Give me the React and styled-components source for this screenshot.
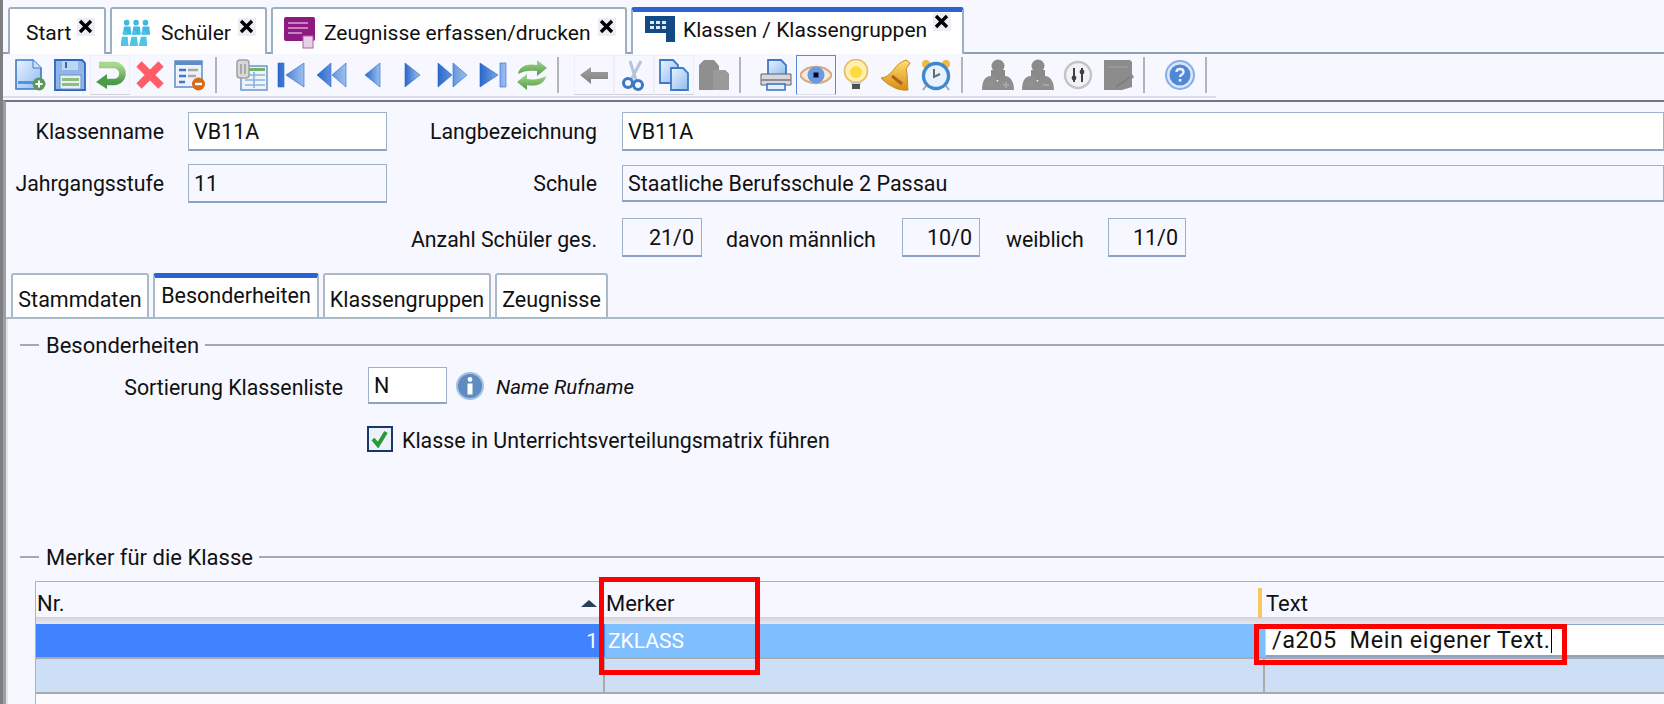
import React from "react";
import styled, { createGlobalStyle } from "styled-components";

const Global = createGlobalStyle`
  html, body { margin: 0; padding: 0; background: #f6f7ff; overflow: hidden; }
  body { font-family: Roboto, "Open Sans", sans-serif; color: #111; }
`;

const Page = styled.div`
  width: 1664px; height: 704px; overflow: hidden; box-sizing: border-box;
  border-left: 3px solid #7d7f82; background: #f6f7ff;
  display: flex; flex-direction: column; font-size: 21px;
`;
const TabBar = styled.div`
  height: 54px; box-sizing: border-box; flex: none; padding: 7px 0 0 5px;
  display: flex; gap: 4px; border-bottom: 2px solid #8ba3b5;
`;
const Tab = styled.div`
  width: ${p => p.$w}px; height: 47px; box-sizing: border-box; flex: none;
  background: #fff; border: 2px solid #9cb0c0; border-bottom: none;
  border-top: ${p => (p.$active ? "5px solid #2d62d2" : "2px solid #9cb0c0")};
  border-radius: 3px 3px 0 0; padding-left: ${p => p.$pad}px;
  display: flex; align-items: ${p => (p.$active ? "flex-start" : "center")};
  white-space: nowrap;
`;
const TabText = styled.span`
  margin-left: ${p => p.$ml || 0}px; line-height: 30px; padding-top: ${p => p.$pt ?? 2}px;
`;
const TabGlyph = styled.svg`
  width: ${p => p.$w || 32}px; height: ${p => p.$h || 32}px; flex: none; margin-top: ${p => p.$mt || 0}px;
`;
const CloseBox = styled.svg`
  width: 18px; height: 18px; flex: none; margin-left: ${p => p.$ml || 6}px; margin-top: ${p => p.$mt ?? -10}px;
`;
const Toolbar = styled.div`
  width: 1213px; height: 44px; box-sizing: border-box; flex: none; padding-left: 7px;
  display: flex; align-items: center; border-bottom: 2px solid #dcdcee;
`;
const Btn = styled.div`
  width: 40px; height: 40px; box-sizing: border-box; flex: none;
  display: flex; align-items: center; justify-content: center;
  border: 1px solid ${p => (p.$frame === "blue" ? "#5a8ae0" : p.$frame === "soft" ? "#eeeef6" : "transparent")};
  border-bottom-color: ${p => (p.$frame === "blue" ? "#dfe0ea" : p.$frame === "soft" ? "#d0d0d8" : "transparent")};
`;
const Sep = styled.div`
  width: 2px; height: 36px; background: #b4b4b8; flex: none; margin: 0 15px 0 5px;
`;
const Ico = styled.svg`
  width: 32px; height: 32px; display: block;
`;
const Defs = styled.svg`
  position: absolute; width: 0; height: 0;
`;
const Main = styled.div`
  margin-top: 2px; flex: 1; min-height: 0; display: flex; flex-direction: column;
  border-top: 2px solid #6f777c; border-left: 3px solid #9aa0a4; box-sizing: border-box;
`;
const Form = styled.div`
  display: flex; flex-direction: column; padding-top: 10px; height: 171px; box-sizing: border-box; flex: none;
`;
const Row = styled.div`
  display: flex; align-items: center; height: ${p => p.$h || 39}px; margin-top: ${p => p.$mt || 0}px; flex: none;
`;
const Label = styled.div`
  width: ${p => p.$w}px; flex: none; text-align: ${p => (p.$left ? "left" : "right")};
  margin-right: ${p => p.$mr ?? 24}px; margin-left: ${p => p.$ml || 0}px; white-space: nowrap; font-size: 21.3px;
  padding-top: ${p => p.$pt || 0}px;
`;
const Field = styled.div`
  box-sizing: border-box; height: ${p => p.$h || 39}px; width: ${p => (p.$w ? p.$w + "px" : "auto")};
  flex: ${p => (p.$w ? "none" : 1)}; background: ${p => (p.$edit ? "#fff" : "#f6f7ff")};
  border: 1px solid #9fb1c9; border-bottom: 2px solid #8ba3c5;
  display: flex; align-items: center; padding: 0 ${p => (p.$right ? 7 : 5)}px;
  justify-content: ${p => (p.$right ? "flex-end" : "flex-start")}; font-size: 21.5px; white-space: nowrap;
`;
const SubTabs = styled.div`
  height: 46px; flex: none; box-sizing: border-box; display: flex; gap: 4px; padding-left: 5px;
  border-bottom: 2px solid #a9bac6;
`;
const SubTab = styled.div`
  width: ${p => p.$w}px; height: 44px; box-sizing: border-box; flex: none; background: #fff;
  border: 2px solid #a9bac6; border-bottom: none;
  border-top: ${p => (p.$active ? "5px solid #2d62d2" : "2px solid #a9bac6")};
  border-radius: 3px 3px 0 0; text-align: center; font-size: 21.5px; white-space: nowrap;
  line-height: ${p => (p.$active ? 36 : 49)}px;
`;
const Panel = styled.div`
  flex: 1; min-height: 0; border-left: 2px solid #e1e3ee; display: flex; flex-direction: column; background: #f6f7ff;
`;
const Group = styled.div`
  display: flex; align-items: center; height: 28px; flex: none; margin-top: ${p => p.$mt}px; padding-left: 12px; font-size: 22px;
`;
const Dash = styled.div`
  width: 19px; height: 2px; background: #a8a8ac; flex: none; margin-right: 7px;
`;
const Rule = styled.div`
  flex: 1; height: 2px; background: #a8a8ac; margin-left: 6px;
`;
const InfoIcon = styled.svg`
  width: 28px; height: 28px; flex: none; margin-left: 9px;
`;
const Hint = styled.div`
  font-style: italic; font-size: 20.5px; margin-left: 12px; white-space: nowrap; padding-top: 2px;
`;
const CheckBox = styled.div`
  width: 26px; height: 26px; box-sizing: border-box; flex: none; margin-left: 359px;
  border: 2px solid #17386b; background: #eef1fa; display: flex; align-items: center; justify-content: center;
`;
const CheckText = styled.div`
  margin-left: 9px; white-space: nowrap; font-size: 21.4px; padding-top: 2px;
`;
const Table = styled.div`
  position: relative; margin: 10px 0 0 27px; flex: 1; min-height: 0;
  border-left: 1px solid #b0b0b0; border-top: 1px solid #b0b0b0; background: #fbfbff;
`;
const Columns = styled.div`
  display: grid; grid-template-columns: 569px 660px 1fr;
`;
const Head = styled.div`
  position: relative; height: 35px; background: #f6f7ff; display: flex; align-items: flex-end;
  padding: 0 0 0 1px; line-height: 26px; font-size: 22px; box-sizing: border-box;
`;
const HeadSep = styled.div`
  grid-column: 1 / -1; height: 7px; background: linear-gradient(#d4d4de, #e6e6ee);
`;
const SortArrow = styled.div`
  position: absolute; right: 8px; top: 18px; width: 0; height: 0;
  border-left: 8px solid transparent; border-right: 8px solid transparent; border-bottom: 7px solid #2a4058;
`;
const Marker = styled.div`
  position: absolute; left: -7px; top: 6px; width: 4px; height: 30px; background: #f8c860;
`;
const Cell = styled.div`
  height: ${p => p.$h}px; box-sizing: border-box; background: ${p => p.$bg};
  border-bottom: 2px solid #aaa; border-right: ${p => (p.$sep ? "2px solid #aaa" : "none")};
  color: #fff; display: flex; align-items: center; font-size: 21px; white-space: pre;
  justify-content: ${p => (p.$right ? "flex-end" : "flex-start")};
  padding: 0 ${p => (p.$right ? 7 : 0)}px 0 ${p => p.$pl || 0}px;
`;
const Editor = styled.div`
  height: 35px; box-sizing: border-box; background: #80bfff; border-bottom: 2px solid #aaa; display: flex;
`;
const EditorBox = styled.div`
  flex: 1; height: 33px; box-sizing: border-box; background: #fff; color: #111;
  border-left: 1px solid #c8d4e4; border-top: 1px solid #8ba3c5; border-bottom: 2px solid #8ba3c5;
  display: flex; align-items: center; padding-left: 6px; white-space: pre; font-size: 23.5px; letter-spacing: 0.55px;
`;
const Caret = styled.span`
  display: inline-block; width: 1px; height: 25px; background: #000;
`;
const RedBox = styled.div`
  position: absolute; left: ${p => p.$x}px; top: ${p => p.$y}px; width: ${p => p.$w}px; height: ${p => p.$h}px;
  box-sizing: border-box; border: 5px solid #f00; pointer-events: none;
`;

const stop = (c1, c2) => (<><stop offset="0" stopColor={c1} /><stop offset="1" stopColor={c2} /></>);
const Gradients = () => (
  <Defs aria-hidden="true">
    <defs>
      <linearGradient id="gDoc" x1="0" y1="0" x2="1" y2="1">{stop("#eaf3ff", "#8fbcf0")}</linearGradient>
      <linearGradient id="gNav" x1="0" y1="0" x2="1" y2="0">{stop("#2a68cc", "#9cc0ee")}</linearGradient>
      <linearGradient id="gGreen" x1="0" y1="0" x2="0" y2="1">{stop("#a8d88c", "#4f9a48")}</linearGradient>
      <linearGradient id="gGrey" x1="0" y1="0" x2="0" y2="1">{stop("#a0a0a0", "#828282")}</linearGradient>
      <linearGradient id="gGold" x1="0" y1="0" x2="0" y2="1">{stop("#ffe070", "#d88a18")}</linearGradient>
    </defs>
  </Defs>
);

const New = () => (<Ico viewBox="0 0 32 32">
  <path d="M2 1h17l8 8v21H2z" fill="url(#gDoc)" stroke="#3f78c8" strokeWidth="1.6" />
  <path d="M19 1v8h8" fill="#cfe2fa" stroke="#3f78c8" />
  <rect x="4" y="22" width="16" height="3" fill="#4f94de" />
  <circle cx="25" cy="25" r="6.5" fill="#5a9a58" /><path d="M25 21.5v7M21.5 25h7" stroke="#fff" strokeWidth="2" />
</Ico>);
const Save = () => (<Ico viewBox="0 0 32 32">
  <path d="M1 1h27l3 3v27H1z" fill="#8fb6e8" stroke="#2f66bc" strokeWidth="1.8" />
  <rect x="8" y="2" width="16" height="9" fill="#bcd6f4" /><rect x="11" y="3" width="2" height="6" fill="#2f66bc" />
  <rect x="6" y="16" width="21" height="14" fill="#e8eef8" stroke="#6a92c8" />
  <rect x="8" y="19" width="17" height="3" fill="#8cc078" /><rect x="8" y="24" width="17" height="3" fill="#8cc078" />
</Ico>);
const Undo = () => (<Ico viewBox="0 0 32 32">
  <path d="M5 6h15a8.5 8.5 0 0 1 0 17H11" fill="none" stroke="url(#gGreen)" strokeWidth="6.5" />
  <path d="M13 15v15L2 23z" fill="#4f9a48" />
</Ico>);
const Del = () => (<Ico viewBox="0 0 32 32">
  <path d="M5 5l22 22M27 5L5 27" stroke="#ff5c68" strokeWidth="7.5" />
</Ico>);
const Props = () => (<Ico viewBox="0 0 32 32">
  <rect x="1" y="2" width="27" height="26" fill="#eef3fb" stroke="#5f8cc4" strokeWidth="1.5" />
  <rect x="1" y="2" width="27" height="4" fill="#5f8cc4" />
  <path d="M5 11h7M5 17h7M5 23h6" stroke="#3f78c8" strokeWidth="2.5" /><path d="M14 11h10M14 17h8" stroke="#a8a8a8" strokeWidth="2.5" />
  <circle cx="24.5" cy="25" r="6.5" fill="#d86a18" /><path d="M21 25h7" stroke="#fff" strokeWidth="2.4" />
</Ico>);
const Grid = () => (<Ico viewBox="0 0 32 32">
  <rect x="5" y="7" width="26" height="24" fill="#eef3fb" stroke="#6a96cc" strokeWidth="1.5" />
  <rect x="9" y="9" width="20" height="3" fill="#78b068" />
  <path d="M9 16h20M9 21h20M9 26h20M18 13v16" stroke="#8cb2dc" strokeWidth="1.6" />
  <rect x="1" y="1" width="12" height="18" rx="3" fill="#d8d8d8" stroke="#a0a0a0" strokeWidth="1.5" />
  <path d="M5 5v10M9 5v10" stroke="#9a9a9a" strokeWidth="1.5" />
</Ico>);
const Nav = ({ d }) => (<Ico viewBox="0 0 32 32"><path d={d} fill="url(#gNav)" stroke="#2a68cc" strokeWidth=".6" /></Ico>);
const Sync = () => (<Ico viewBox="0 0 32 32">
  <path d="M2 15c1-8 10-11 19-9V1l10 8-10 8v-5c-7-1-14 0-19 3z" fill="url(#gGreen)" />
  <path d="M30 17c-1 8-10 11-19 9v5L1 23l10-8v5c7 1 14 0 19-3z" fill="url(#gGreen)" />
</Ico>);
const Back = () => (<Ico viewBox="0 0 32 32"><path d="M2 16l11-8v5h17v7H13v5z" fill="url(#gGrey)" /></Ico>);
const Cut = () => (<Ico viewBox="0 0 32 32">
  <path d="M23 2l-10 19M12 2l6 19" stroke="#b4c4dc" strokeWidth="3" />
  <circle cx="10" cy="24" r="4.5" fill="none" stroke="#3a78c4" strokeWidth="3" />
  <circle cx="20" cy="26" r="4.5" fill="none" stroke="#3a78c4" strokeWidth="3" />
</Ico>);
const Copy = () => (<Ico viewBox="0 0 32 32">
  <path d="M2 1h13l5 5v18H2z" fill="url(#gDoc)" stroke="#3f78c8" strokeWidth="1.8" />
  <path d="M13 9h12l5 5v17H13z" fill="url(#gDoc)" stroke="#3f78c8" strokeWidth="1.8" />
</Ico>);
const PasteGrey = () => (<Ico viewBox="0 0 32 32">
  <path d="M1 6l5-5h10l5 6v4h6l4 4v16H1z" fill="#8f8f8f" /><path d="M15 11h12l4 4v16H15z" fill="#9a9a9a" />
</Ico>);
const Printer = () => (<Ico viewBox="0 0 32 32">
  <path d="M8 1h13l5 5v10H8z" fill="url(#gDoc)" stroke="#3f78c8" strokeWidth="1.8" />
  <path d="M1 15h30v11H1z" fill="#d8d8dc" stroke="#606060" />
  <rect x="1" y="20" width="30" height="2" fill="#909094" />
  <rect x="7" y="25" width="18" height="6" fill="#e6eef8" stroke="#3f78c8" strokeWidth="1.6" />
</Ico>);
const Eye = () => (<Ico viewBox="0 0 32 32">
  <path d="M0 16c6-11 26-11 32 0-6 11-26 11-32 0z" fill="#f8e8d8" stroke="#d8a880" strokeWidth="2" />
  <circle cx="16" cy="16" r="8.5" fill="#6a9ae0" /><rect x="13.5" y="13.5" width="5" height="5" fill="#0a0a20" />
</Ico>);
const Bulb = () => (<Ico viewBox="0 0 32 32">
  <circle cx="16" cy="12" r="11.5" fill="#fff0b0" stroke="#e8b860" strokeWidth="1.6" />
  <circle cx="16" cy="13" r="6" fill="#ffd83c" />
  <rect x="11" y="22" width="10" height="3" fill="#c8c8c8" /><rect x="12" y="25" width="8" height="5" fill="#505050" />
</Ico>);
const Bell = () => (<Ico viewBox="0 0 32 32">
  <path d="M26 1l4 3-4 6c2 6 1 13 2 21-10 1-19-4-27-12 7-1 10-5 14-10 3-4 6-6 11-8z" fill="url(#gGold)" stroke="#c88a20" />
  <path d="M12 17l10 8" stroke="#b06018" strokeWidth="3" />
</Ico>);
const Clock = () => (<Ico viewBox="0 0 32 32">
  <circle cx="6" cy="5" r="4" fill="#f0b840" /><circle cx="26" cy="5" r="4" fill="#f0b840" />
  <path d="M6 27l-3 4M26 27l3 4" stroke="#a0a0a8" strokeWidth="2" />
  <circle cx="16" cy="17" r="12.5" fill="#e8f2fc" stroke="#3f88d0" strokeWidth="3.4" />
  <path d="M14 10v8l6-3" fill="none" stroke="#6a6a70" strokeWidth="2" />
</Ico>);
const Persons = ({ sign }) => (<Ico viewBox="0 0 32 32">
  <circle cx="16" cy="7" r="6.5" fill="#8a8a8a" /><path d="M9 11h14v10H9z" fill="#8a8a8a" />
  <path d="M0 31c0-9 3-14 9-14 4 0 7 3 7 14zM14 31c0-9 4-14 9-14s9 5 9 14z" fill="#8e8e8e" />
  <path d="M5 24h7M5 27h7" stroke="#989898" strokeWidth="1.2" />
  <path d={sign === "+" ? "M21 26h6M24 23v6" : "M21 26h6"} stroke="#aaa" strokeWidth="1.6" />
</Ico>);
const Tune = () => (<Ico viewBox="0 0 32 32">
  <circle cx="16" cy="16" r="13" fill="#f2f2f4" stroke="#c4c4c8" strokeWidth="2.4" />
  <path d="M12 9v14M20 9v14" stroke="#404040" strokeWidth="2" />
  <circle cx="12" cy="19" r="2.4" fill="#404040" /><circle cx="20" cy="13" r="2.4" fill="#404040" />
</Ico>);
const NoteGrey = () => (<Ico viewBox="0 0 32 32">
  <path d="M2 1h26l2 2v12l2 3-2 2v8l-10 3H2z" fill="#8c8c8c" /><path d="M6 8h20" stroke="#9c9c9c" strokeWidth="1.5" />
  <path d="M14 28l14-10" stroke="#7a7a7a" strokeWidth="1.5" />
</Ico>);
const Help = () => (<Ico viewBox="0 0 32 32">
  <circle cx="16" cy="16" r="14" fill="#dbe6f8" stroke="#86aee8" strokeWidth="2" />
  <circle cx="16" cy="16" r="10.5" fill="#4f88d4" />
  <path d="M12.5 13c0-4 7-4 7 0 0 3-3.5 2.5-3.5 5" fill="none" stroke="#eef" strokeWidth="2.4" />
  <rect x="14.8" y="20" width="2.6" height="2.6" fill="#eef" />
</Ico>);

const Close = ({ ml, mt }) => (
  <CloseBox viewBox="0 0 18 18" $ml={ml} $mt={mt}>
    <rect x="0" y="0" width="18" height="18" fill="#eceef4" />
    <path d="M3 3l11 11M14 3L3 14" stroke="#000" strokeWidth="3.4" />
  </CloseBox>
);
const StudentGlyph = () => (
  <TabGlyph viewBox="0 0 32 32" $w={32} $h={30}>
    {[4, 14, 24].map(x => (<g key={x} fill="#3fb8e0">
      <circle cx={x + 1} cy="6" r="3" /><path d={`M${x - 2} 10h7l1 9h-9z`} />
      <circle cx={x - 1} cy="17" r="2.5" fill="#50c4e4" /><path d={`M${x - 4} 21h6l1 10h-9z`} fill="#50c4e4" />
    </g>))}
  </TabGlyph>
);
const ReportGlyph = () => (
  <TabGlyph viewBox="0 0 32 32" $mt={2}>
    <rect x="0" y="0" width="31" height="24" rx="2" fill="#8c1a80" />
    <path d="M4 6h20M4 11h20M4 16h14" stroke="#c880c0" strokeWidth="2" />
    <rect x="19" y="19" width="10" height="12" fill="#e8d0e8" stroke="#b060a8" />
  </TabGlyph>
);
const ClassGlyph = () => (
  <TabGlyph viewBox="0 0 30 28" $w={30} $h={28} $mt={2}>
    <path d="M0 2h30v26h-9V19H0z" fill="#144a84" />
    <path d="M5 7h4v3H5zM11 7h4v3h-4zM17 7h4v3h-4zM5 12h4v3H5zM11 12h4v3h-4zM17 12h4v3h-4z" fill="#dfe8f4" />
  </TabGlyph>
);

const navFirst = "M2 4h6v24H2zM28 4v24L10 16z";
const navRew = "M15 4v24L1 16zM30 4v24L16 16z";
const navPrev = "M24 4v24L9 16z";
const navNext = "M9 4v24l15-12z";
const navFf = "M2 4v24l14-12zM17 4v24l14-12z";
const navLast = "M4 4v24l18-12zM24 4h6v24h-6z";

const Tb = ({ children, frame }) => <Btn $frame={frame}>{children}</Btn>;

export default function App() {
  return (
    <Page>
      <Global />
      <Gradients />
      <TabBar>
        <Tab $w={98} $pad={16}><TabText>Start</TabText><Close ml={6} /></Tab>
        <Tab $w={157} $pad={9}><StudentGlyph /><TabText $ml={8}>Schüler</TabText><Close ml={7} /></Tab>
        <Tab $w={356} $pad={11}><ReportGlyph /><TabText $ml={8}>Zeugnisse erfassen/drucken</TabText><Close ml={7} /></Tab>
        <Tab $w={333} $pad={12} $active><ClassGlyph /><TabText $ml={8} $pt={3}>Klassen / Klassengruppen</TabText><Close ml={6} mt={1} /></Tab>
      </TabBar>
      <Toolbar>
        <Tb><New /></Tb><Tb><Save /></Tb><Tb frame="soft"><Undo /></Tb><Tb><Del /></Tb><Tb><Props /></Tb><Sep />
        <Tb><Grid /></Tb><Tb><Nav d={navFirst} /></Tb><Tb><Nav d={navRew} /></Tb><Tb><Nav d={navPrev} /></Tb><Tb><Nav d={navNext} /></Tb><Tb><Nav d={navFf} /></Tb><Tb><Nav d={navLast} /></Tb><Tb><Sync /></Tb><Sep />
        <Tb frame="soft"><Back /></Tb><Tb frame="soft"><Cut /></Tb><Tb frame="soft"><Copy /></Tb><Tb><PasteGrey /></Tb><Sep />
        <Tb><Printer /></Tb><Tb frame="blue"><Eye /></Tb><Tb><Bulb /></Tb><Tb><Bell /></Tb><Tb><Clock /></Tb><Sep />
        <Tb><Persons sign="+" /></Tb><Tb><Persons sign="-" /></Tb><Tb><Tune /></Tb><Tb><NoteGrey /></Tb><Sep />
        <Tb><Help /></Tb><Sep />
      </Toolbar>
      <Main>
        <Form>
          <Row>
            <Label $w={158}>Klassenname</Label><Field $w={199} $edit>VB11A</Field>
            <Label $w={210} $mr={25}>Langbezeichnung</Label><Field $edit>VB11A</Field>
          </Row>
          <Row $mt={13}>
            <Label $w={158}>Jahrgangsstufe</Label><Field $w={199}>11</Field>
            <Label $w={210} $mr={25}>Schule</Label><Field $h={37}>Staatliche Berufsschule 2 Passau</Field>
          </Row>
          <Row $mt={15}>
            <Label $w={591} $mr={25} $pt={4}>Anzahl Schüler ges.</Label><Field $w={80} $right>21/0</Field>
            <Label $w={153} $ml={24} $mr={23} $left $pt={4}>davon männlich</Label><Field $w={78} $right>10/0</Field>
            <Label $w={78} $ml={26} $mr={24} $left $pt={4}>weiblich</Label><Field $w={78} $right>11/0</Field>
          </Row>
        </Form>
        <SubTabs>
          <SubTab $w={138}>Stammdaten</SubTab>
          <SubTab $w={166} $active>Besonderheiten</SubTab>
          <SubTab $w={168}>Klassengruppen</SubTab>
          <SubTab $w={113}>Zeugnisse</SubTab>
        </SubTabs>
        <Panel>
          <Group $mt={12}><Dash />Besonderheiten<Rule /></Group>
          <Row $mt={8} $h={37}>
            <Label $w={335} $mr={25} $pt={3}>Sortierung Klassenliste</Label>
            <Field $w={79} $h={37} $edit>N</Field>
            <InfoIcon viewBox="0 0 28 28">
              <circle cx="14" cy="14" r="13" fill="#5f8cc0" stroke="#a4c0e0" strokeWidth="2" />
              <circle cx="14" cy="7.5" r="2.4" fill="#fff" /><rect x="11.5" y="11.5" width="5" height="11" fill="#fff" />
            </InfoIcon>
            <Hint>Name Rufname</Hint>
          </Row>
          <Row $mt={22} $h={26}>
            <CheckBox>
              <svg width="20" height="20" viewBox="0 0 20 20"><path d="M3 10l5 6 8-13" fill="none" stroke="#2a9a38" strokeWidth="4" /></svg>
            </CheckBox>
            <CheckText>Klasse in Unterrichtsverteilungsmatrix führen</CheckText>
          </Row>
          <Group $mt={91}><Dash />Merker für die Klasse<Rule /></Group>
          <Table>
            <Columns>
              <Head>Nr.<SortArrow /></Head>
              <Head>Merker</Head>
              <Head>Text<Marker /></Head>
              <HeadSep />
              <Cell $h={35} $bg="#4182ff" $right>1</Cell>
              <Cell $h={35} $bg="#80bfff" $pl={3}>ZKLASS</Cell>
              <Editor><EditorBox>/a205  Mein eigener Text.<Caret /></EditorBox></Editor>
              <Cell $h={35} $bg="#cddff7" $sep />
              <Cell $h={35} $bg="#cddff7" $sep />
              <Cell $h={35} $bg="#cddff7" />
            </Columns>
            <RedBox $x={563} $y={-5} $w={161} $h={98} />
            <RedBox $x={1218} $y={42} $w={313} $h={41} />
          </Table>
        </Panel>
      </Main>
    </Page>
  );
}
